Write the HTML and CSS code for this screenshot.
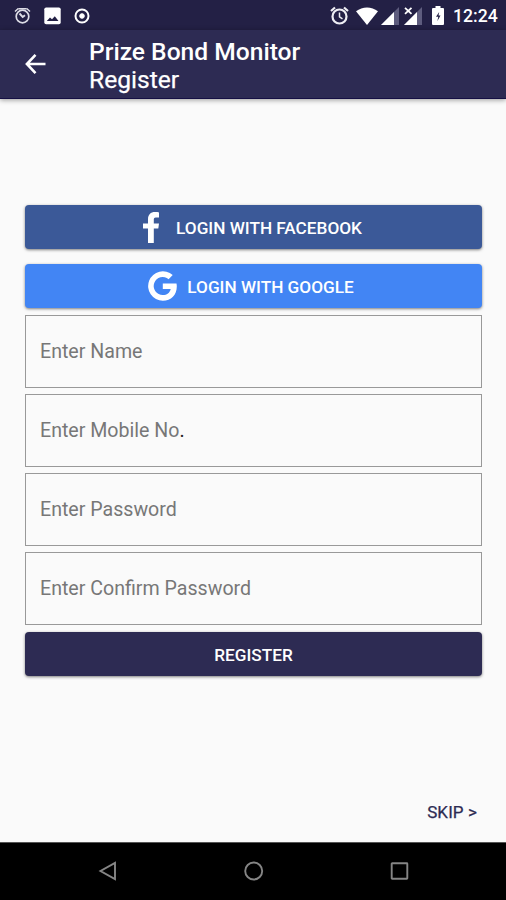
FILE: index.html
```html
<!DOCTYPE html>
<html lang="en">
<head>
<meta charset="utf-8">
<meta name="viewport" content="width=device-width, initial-scale=1">
<title>Prize Bond Monitor - Register</title>
<link rel="stylesheet" href="styles.css">
</head>
<body>
<div class="screen">
  <div class="status">
    <div class="status-left">
      <svg width="17" height="18" viewBox="0 0 17 18" fill="none" stroke="#dddde6"><circle cx="8.500" cy="9.500" r="6.300" stroke-width="1.700"/><path d="M1 4.500 4.300 1.500M16 4.500 12.700 1.500M4.500 1.800h8" stroke-width="1.500"/><path d="M5.500 6.500 8.700 10l2.300-1.800" stroke-width="1.900"/></svg>
      <svg width="17" height="18" viewBox="0 0 17 18"><rect x=".3" y=".5" width="16.400" height="16.800" rx="1.800" fill="#fff"/><path d="M2.800 14 6 10.500l2 1.800 2.800-3 3.700 4.700z" fill="#232045"/></svg>
      <svg width="16" height="18" viewBox="0 0 16 18" fill="none" stroke="#fff"><circle cx="8" cy="9" r="6.500" stroke-width="2"/><circle cx="8" cy="9" r="2.300" stroke-width="1" fill="#fff"/></svg>
    </div>
    <div class="status-right">
      <svg width="19" height="19" viewBox="0 0 19 19" fill="none" stroke="#eeeef3"><circle cx="9.500" cy="10.500" r="7" stroke-width="2.200"/><path d="M1 5 5 1.500M18 5l-4-3.500" stroke-width="2.200"/><path d="M9.500 6.500v4.300l3 2" stroke-width="1.500"/></svg>
      <svg class="wifi" width="22" height="18" viewBox="0 0 22 18"><path d="M0 4.300C6.500-.9 15.500-.9 22 4.300L11 18z" fill="#fff"/></svg>
      <svg class="signal" width="18" height="18" viewBox="0 0 18 18"><path d="M18 0v18H0z" fill="#5e5c7e"/><path d="M13 5v13H0z" fill="#fff"/></svg>
      <svg class="signal-off" width="19" height="19" viewBox="0 0 19 19"><path d="M18 1v18H0z" fill="#5e5c7e"/><path d="M13 6v13H0z" fill="#fff"/><path d="M0 0h9v8H0z" fill="#232045"/><path d="m1 1.800 6.500 6M7.500 1.800 1 7.800" stroke="#fff" stroke-width="1.800"/></svg>
      <svg class="battery" width="12" height="19" viewBox="0 0 12 19"><path d="M3.500 0h5v2H11a1 1 0 0 1 1 1v15a1 1 0 0 1-1 1H1a1 1 0 0 1-1-1V3a1 1 0 0 1 1-1h2.500z" fill="#fff"/><path d="M7.200 6 4 10.800h2.300l-1 4.500 3.200-5.700H6.500z" fill="#232045"/></svg>
      <span class="clock">12:24</span>
    </div>
  </div>
  <header class="appbar">
    <svg class="back" width="22" height="22" viewBox="0 0 22 22" fill="none" stroke="#fff" stroke-width="2.600"><path d="M20.500 11H2.500M10.500 1.900 1.900 11l8.600 9.100"/></svg>
    <div class="titles">
      <div class="title">Prize Bond Monitor</div>
      <div class="subtitle">Register</div>
    </div>
  </header>
  <main class="content">
    <button class="btn facebook">
      <svg width="16" height="31" viewBox="0 0 16 31"><path d="M16 .4v5h-3.200C11 5.400 10.800 6.300 10.800 7.800v3.700H16l-.7 5h-4.500V31H5V16.500H0v-5h5V7.300C5 2.700 7.600.1 12 .1c1.800 0 3.200.1 4 .3z" fill="#fff"/></svg>
      <span>LOGIN WITH FACEBOOK</span>
    </button>
    <button class="btn google">
      <svg width="29" height="30" viewBox="0 0 29 30"><path d="M14.800 12.400v5.500h7.900c-.9 3.900-3.800 6.100-7.900 6.100a9 9 0 1 1 5.800-15.800l4.100-4.100A14.700 14.700 0 1 0 14.800 29.700c8.400 0 14-5.900 14-14.300 0-1.100-.1-2-.3-3z" fill="#fff"/></svg>
      <span>LOGIN WITH GOOGLE</span>
    </button>
    <div class="fields">
      <div class="field">Enter Name</div>
      <div class="field">Enter Mobile No<span class="dot">.</span></div>
      <div class="field">Enter Password</div>
      <div class="field">Enter Confirm Password</div>
    </div>
    <button class="btn register"><span>REGISTER</span></button>
    <a class="skip">SKIP &gt;</a>
  </main>
  <nav class="navbar">
    <svg width="20" height="20" viewBox="0 0 20 20"><path d="M17 1.900v16.200L2.500 10z"/></svg>
    <svg width="20" height="20" viewBox="0 0 20 20"><circle cx="9.700" cy="10" r="8.500"/></svg>
    <svg width="20" height="20" viewBox="0 0 20 20"><rect x="1.700" y="2.200" width="15.600" height="15.600" rx=".5"/></svg>
  </nav>
</div>
</body>
</html>
```
FILE: styles.css
```css
* { box-sizing: border-box; }
body { margin: 0; font-family: Roboto, "Liberation Sans", sans-serif; background: #fafafa; }
svg { display: block; flex: none; }
.screen { width: 506px; height: 900px; display: flex; flex-direction: column; overflow: hidden; }
.status { height: 30px; flex: none; background: #232045; display: flex; justify-content: space-between; padding: 0 9px 0 14px; }
.status-left { display: flex; align-items: center; gap: 13px; padding-top: 1px; }
.status-right { display: flex; align-items: center; padding-top: 1px; }
.wifi { margin-left: 7px; }
.signal { margin-left: 3px; }
.signal-off { margin-left: 5px; }
.battery { margin-left: 9px; }
.clock { margin-left: 9px; width: 44px; color: #fff; font-size: 17.600px; font-weight: 500; line-height: 20px; white-space: nowrap; }
.appbar { height: 69px; flex: none; background: #2d2b53; border-bottom: 1px solid #151044; box-shadow: 0 1px 5px rgba(0,0,0,.4); display: flex; align-items: center; padding-left: 25px; color: #fff; }
.titles { margin-left: 42px; font-size: 24.600px; line-height: 28px; padding-top: 3px; }
.title { font-weight: 500; }
.subtitle { -webkit-text-stroke: .25px #fff; }
.content { flex: 1; display: flex; flex-direction: column; padding: 106px 24px 0 25px; }
.btn { height: 44px; flex: none; border: 0; border-radius: 4px; padding: 0; color: #fff; font: 500 17.200px/20px Roboto, "Liberation Sans", sans-serif; display: flex; align-items: center; justify-content: center; box-shadow: 0 1px 3px rgba(0,0,0,.5); }
.btn span { padding-top: 1px; }
.facebook { background: #3b5998; gap: 17px; padding-right: 2px; }
.google { background: #4285f4; gap: 10px; margin-top: 15px; padding-right: 5px; }
.fields { display: flex; flex-direction: column; gap: 6px; margin-top: 7px; }
.field { height: 73px; border: 1px solid #999; padding: 0 14px 1px; display: flex; align-items: center; color: #777; font-size: 19.600px; }
.dot { color: #222; }
.register { background: #2d2b53; margin-top: 7px; }
.skip { align-self: flex-end; margin: 126px 5px 0 0; color: #2d2b53; font-size: 17px; line-height: 20px; letter-spacing: .1px; -webkit-text-stroke: .25px #2d2b53; }
.navbar { height: 58px; flex: none; background: #000; border-top: 1px solid #555; display: flex; justify-content: center; align-items: center; gap: 126px; padding: 0 0 2px 1px; }
.navbar svg { fill: none; stroke: #858585; stroke-width: 1.900; }
```
